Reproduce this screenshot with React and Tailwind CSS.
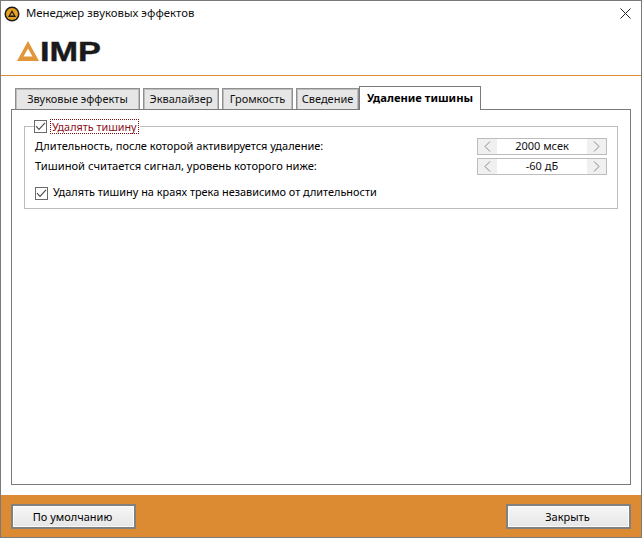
import React from 'react';

const font = 'font-["Noto_Sans",sans-serif]';

const tabs = ['Звуковые эффекты', 'Эквалайзер', 'Громкость', 'Сведение'];
const tabWidths = ['w-[125px]', 'w-[76px]', 'w-[71px]', 'w-[63px]'];

const Checkbox = () => (
  <span className="flex h-[13px] w-[13px] shrink-0 items-center justify-center border border-[#6a6a6a] bg-white">
    <svg width="11" height="11" viewBox="0 0 11 11" fill="none">
      <path d="M1 5.2 L4 8.4 L10 1.8" stroke="#4a4a4a" strokeWidth="1.1" />
    </svg>
  </span>
);

const Spinner = ({ value }) => (
  <div className="flex h-[17px] w-[130px] items-center justify-between border border-[#bcbcbc] bg-white text-[#111111]">
    <span className="flex h-full w-[19px] items-center justify-center bg-[#f0f0f0]">
      <svg width="7" height="11" viewBox="0 0 7 11" fill="none">
        <path d="M6 0.5 L1 5.5 L6 10.5" stroke="#8a8a8a" />
      </svg>
    </span>
    <span className="pb-[2px]">{value}</span>
    <span className="flex h-full w-[19px] items-center justify-center bg-[#f0f0f0]">
      <svg width="7" height="11" viewBox="0 0 7 11" fill="none">
        <path d="M1 0.5 L6 5.5 L1 10.5" stroke="#8a8a8a" />
      </svg>
    </span>
  </div>
);

const FooterButton = ({ children }) => (
  <button className="flex h-[25px] w-[125px] items-center justify-center border-2 border-[#808080] bg-gradient-to-b from-[#f6f6f6] to-[#e6e6e6] pr-[2px] text-black shadow-[inset_0_0_0_1px_#fbfbfb]">
    {children}
  </button>
);

export default function App() {
  return (
    <div className={`${font} flex h-[538px] w-[642px] flex-col border border-[#7a7a7a] bg-white text-[11px] leading-[16px] text-black`}>
      {/* title bar */}
      <div className="flex h-[25px] shrink-0 items-center pl-[3px] pr-[10px]">
        <svg width="16" height="16" viewBox="0 0 16 16" className="mr-[6px]">
          <circle cx="8" cy="8" r="7.5" fill="#1c1c1c" />
          <circle cx="8" cy="8" r="6" fill="#e9a122" />
          <path d="M8 4 L12 11 H4 Z M8 6.4 L6.2 9.6 H9.8 Z" fill="#1c1c1c" fillRule="evenodd" />
        </svg>
        <span className="pb-[2px] text-[11.4px] text-[#111111]">Менеджер звуковых эффектов</span>
        <svg width="11" height="11" viewBox="0 0 11 11" className="ml-auto" fill="none">
          <path d="M0.5 0.5 L10.5 10.5 M10.5 0.5 L0.5 10.5" stroke="#222222" />
        </svg>
      </div>

      {/* logo */}
      <div className="flex h-[50px] shrink-0 items-start border-b border-[#dd8c33] pl-[16px] pt-[15px]">
        <svg width="96" height="34" viewBox="0 -8 96 34" className="-mt-[8px]">
          <path d="M11 0 L22 20 H0 Z M11 7.5 L6.5 15.5 H15.5 Z" fill="#e2963a" fillRule="evenodd" />
          <text x="23" y="19.5" textLength="61" lengthAdjust="spacingAndGlyphs" fontFamily="Liberation Sans" fontWeight="700" fontSize="27" fill="#1a1a1a" stroke="#1a1a1a" strokeWidth="0.4">IMP</text>
        </svg>
      </div>

      {/* tabs */}
      <div className="flex min-h-0 flex-1 flex-col px-[10px] pt-[10px]">
        <div className="relative z-10 flex h-[24px] shrink-0 items-end gap-[3px] pl-[4px]">
          {tabs.map((tab, i) => (
            <div key={tab} className={`mb-[1px] flex h-[21px] ${tabWidths[i]} items-center justify-center border border-b-0 border-[#8f8f8f] bg-[#e6e6e6] text-[#111111] shadow-[inset_1px_1px_0_#bdbdbd,inset_-1px_0_0_#bdbdbd]`}>
              {tab}
            </div>
          ))}
          <div className="-ml-[3px] flex h-[24px] w-[122px] items-center justify-center border border-b-0 border-[#7a7a7a] bg-white pb-[1px] text-[11.2px] font-bold text-black">
            Удаление тишины
          </div>
        </div>

        <div className="-mt-[1px] flex-1 border border-[#7a7a7a] px-[12px] pt-[16px]">
          <div className="h-[83px] border border-[#bcbcbc] px-[10px]">
            <div className="-ml-[1px] -mt-[8px] flex h-[15px] w-max items-center bg-white pr-[1px]">
              <Checkbox />
              <span className="ml-[3px] border border-dotted border-[#7b1010] px-[1px] text-[10.8px] leading-[13px] text-[#8b0f1a]">Удалять тишину</span>
            </div>
            <div className="mt-[4px] flex h-[17px] items-center justify-between">
              <span className="pb-[2px]">Длительность, после которой активируется удаление:</span>
              <Spinner value="2000 мсек" />
            </div>
            <div className="mt-[3px] flex h-[17px] items-center justify-between">
              <span className="pb-[2px] text-[11.15px]">Тишиной считается сигнал, уровень которого ниже:</span>
              <Spinner value="-60 дБ" />
            </div>
            <div className="mt-[12px] flex h-[13px] items-center">
              <Checkbox />
              <span className="ml-[5px] pb-[3px] text-[10.9px]">Удалять тишину на краях трека независимо от длительности</span>
            </div>
          </div>
        </div>

        <div className="h-[10px] shrink-0" />
      </div>

      {/* footer */}
      <div className="flex h-[42px] shrink-0 items-center justify-between bg-[#dc8b33] px-[10px] pt-[1px]">
        <FooterButton>По умолчанию</FooterButton>
        <FooterButton>Закрыть</FooterButton>
      </div>
    </div>
  );
}
